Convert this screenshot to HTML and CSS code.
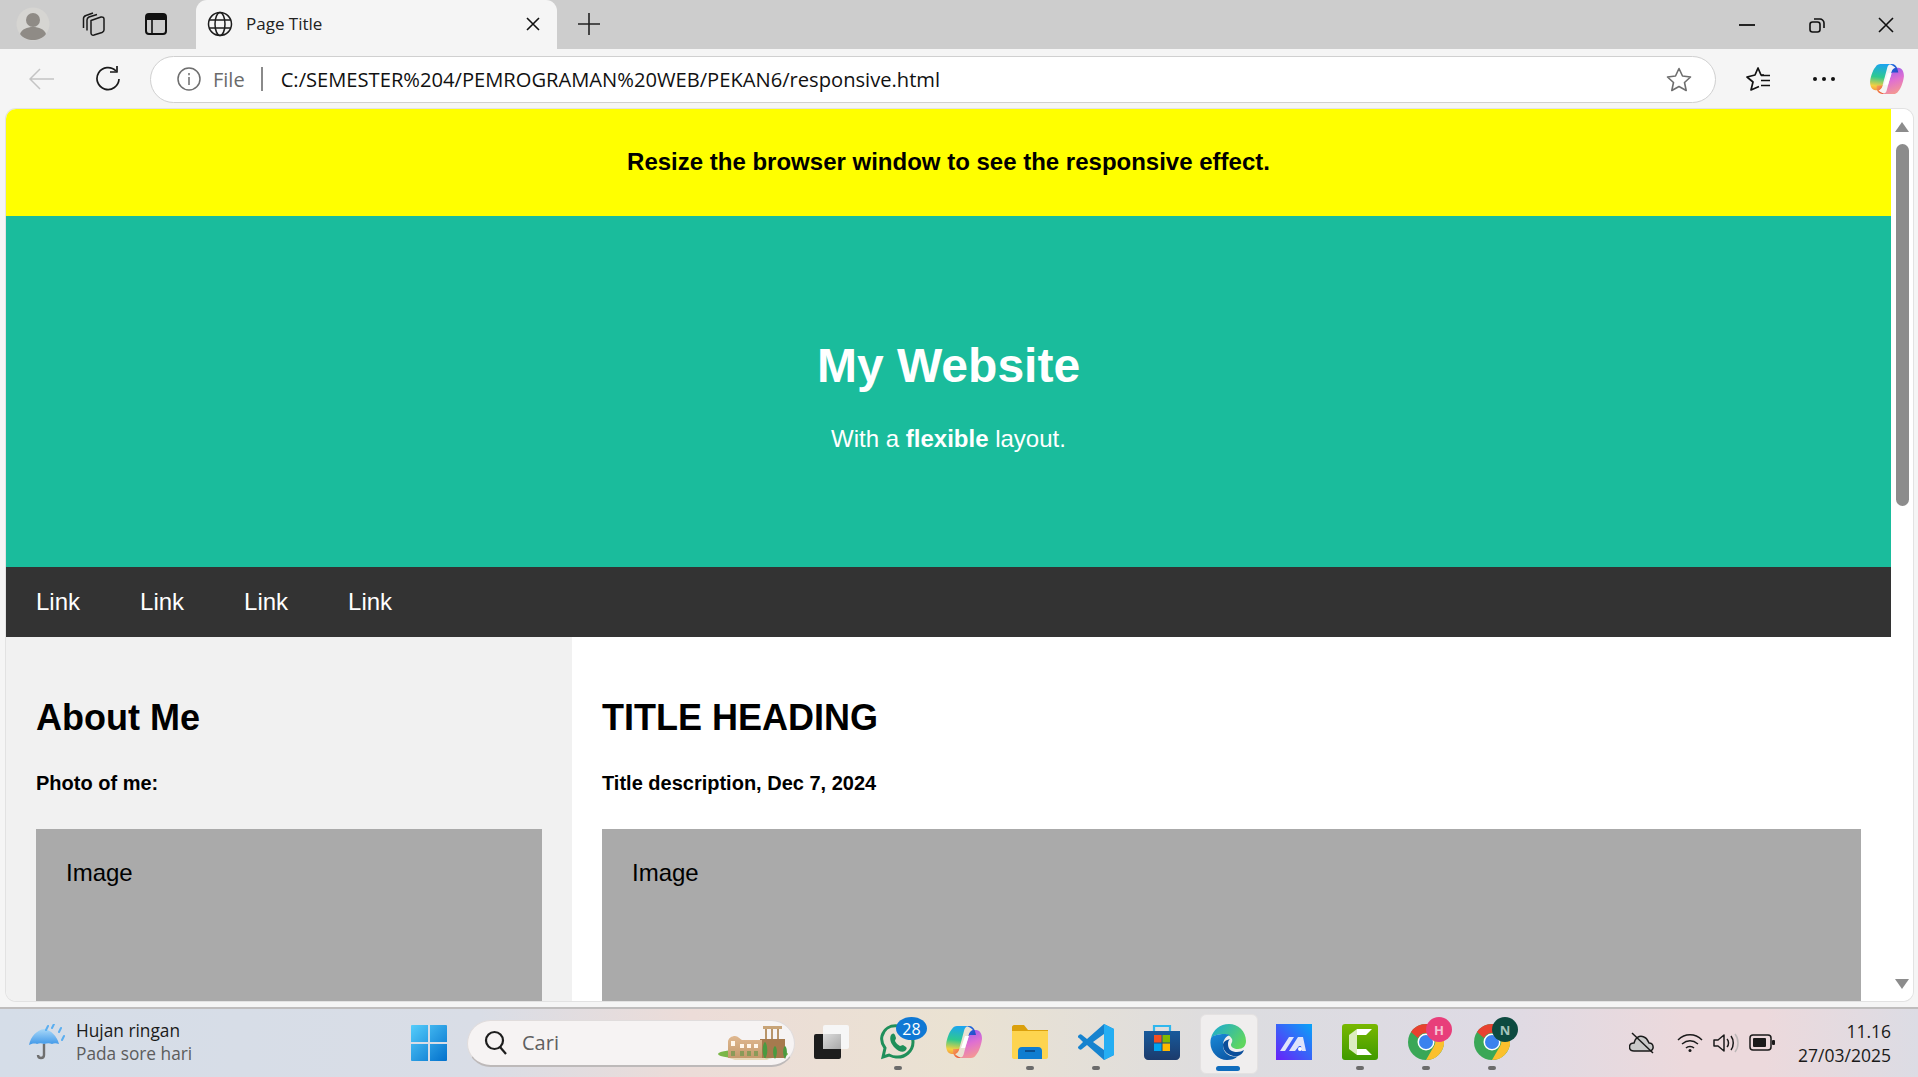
FILE: index.html
```html
<!DOCTYPE html>
<html lang="en">
<head>
    <meta charset="UTF-8">
    <title>Page Title</title>
    <link rel="stylesheet" href="styles.css">
</head>
<body>
<svg class="defs" width="0" height="0">
    <defs>
        <linearGradient id="cpA" x1="0.5" y1="0" x2="0.4" y2="1"><stop offset="0" stop-color="#1ba4f0"/><stop offset="0.5" stop-color="#2fc98f"/><stop offset="0.85" stop-color="#f5d040"/><stop offset="1" stop-color="#f5a040"/></linearGradient>
        <linearGradient id="cpB" x1="0.3" y1="0" x2="0.6" y2="1"><stop offset="0" stop-color="#9a5cf0"/><stop offset="0.5" stop-color="#e070d0"/><stop offset="1" stop-color="#f59a90"/></linearGradient>
        <linearGradient id="cpC" x1="0" y1="0" x2="1" y2="1"><stop offset="0" stop-color="#1a7ae8"/><stop offset="1" stop-color="#2a3fc0"/></linearGradient>
        <linearGradient id="cpD" x1="0" y1="0" x2="1" y2="1"><stop offset="0" stop-color="#f8b060"/><stop offset="1" stop-color="#e8402c"/></linearGradient>
        <linearGradient id="winG" x1="0" y1="0" x2="1" y2="1"><stop offset="0" stop-color="#55cdfb"/><stop offset="1" stop-color="#0270cc"/></linearGradient>
        <linearGradient id="edgeA" x1="0" y1="0" x2="1" y2="0.6"><stop offset="0" stop-color="#18a8d8"/><stop offset="1" stop-color="#5fd65f"/></linearGradient>
        <linearGradient id="edgeB" x1="0" y1="0" x2="0.5" y2="1"><stop offset="0" stop-color="#1a8ad8"/><stop offset="1" stop-color="#0c5aa8"/></linearGradient>
        <linearGradient id="mG" x1="1" y1="0" x2="0" y2="1"><stop offset="0" stop-color="#08a4f8"/><stop offset="1" stop-color="#6a20f8"/></linearGradient>
        <linearGradient id="camG" x1="0" y1="0" x2="0" y2="1"><stop offset="0" stop-color="#78b800"/><stop offset="1" stop-color="#3f9a00"/></linearGradient>
        <linearGradient id="storeG" x1="0" y1="0" x2="0" y2="1"><stop offset="0" stop-color="#175a9c"/><stop offset="1" stop-color="#1c3b6c"/></linearGradient>
        <linearGradient id="rainG" x1="0" y1="0" x2="0" y2="1"><stop offset="0" stop-color="#a8d8f8"/><stop offset="1" stop-color="#3d96e8"/></linearGradient>
        <linearGradient id="wallG" x1="0" y1="0" x2="0" y2="1"><stop offset="0" stop-color="#e0b890"/><stop offset="1" stop-color="#c49a6c"/></linearGradient>
        <linearGradient id="viewG" x1="0" y1="0" x2="1" y2="1"><stop offset="0" stop-color="#dcdcdc"/><stop offset="1" stop-color="#a8a8a8"/></linearGradient>
        <symbol id="copilot" viewBox="0 0 36 34">
            <path d="M11 1H23C20 1 18.500 3 18 6L14 21C13 25 12 28 9 29H6C2 29 0 25 0 20 1 12 4 6 6 4 7 2 9 1 11 1Z" fill="url(#cpA)"/>
            <path d="M25 33H13C16 33 17.500 31 18 28L22 13C23 9 24 6 27 5H30C34 5 36 9 36 14 35 22 32 28 30 30 29 32 27 33 25 33Z" fill="url(#cpB)"/>
            <path d="M19 1H23C26 1 28 3 29 6L30 10H24C23 10 22 11 22 13 23 8 24 6 27 5 25 3 22 1 19 1Z" fill="url(#cpC)"/>
            <path d="M7 24H12C13 24 14 23 14 21 13 26 12 28 9 29 11 31 14 33 17 33H13C10 33 8 31 7 28Z" fill="url(#cpD)"/>
            <path d="M15 23L19 11 23 11 19 23Z" fill="#fff"/>
        </symbol>
        <symbol id="chrome" viewBox="0 0 36 36">
            <circle cx="18" cy="18" r="18" fill="#3aa757"/>
            <path d="M18 0a18 18 0 0 1 15.600 9H18a9 9 0 0 0-8 5L3 8A18 18 0 0 1 18 0z" fill="#e8412f"/>
            <path d="M33.600 9A18 18 0 0 1 18 36l7.800-13.500A9 9 0 0 0 26 13l7.600-4z" fill="#fbc02d"/>
            <circle cx="18" cy="18" r="8.500" fill="#fff"/>
            <circle cx="18" cy="18" r="7" fill="#3b82ee"/>
        </symbol>
    </defs>
</svg>

<!-- Barra de pestañas -->
<div class="tabstrip">
    <div class="strip-btn first">
        <svg width="34" height="34" viewBox="0 0 34 34"><circle cx="17" cy="17" r="16.500" fill="#d6d5d2"/><circle cx="17" cy="13" r="7" fill="#8f8b86"/><path d="M4 27c2-5 7-7 13-7s11 2 13 7c-3 4-8 6-13 6s-10-2-13-6z" fill="#8f8b86"/></svg>
    </div>
    <div class="strip-btn second">
        <svg width="24" height="24" viewBox="0 0 24 24" fill="none" stroke="#1a1a1a" stroke-width="1.500" stroke-linejoin="round"><path d="M10 8.500L20 5C22 4.500 23 6 23 7V18C23 19 22 20 21 20.500L13 23C11 23.500 10 22.500 10 21Z"/><path d="M6 18.500V8C6 6.500 7 5.500 8 5L16 2.500"/><path d="M2.500 16V6.500C2.500 5 3.500 4 5 3.500L12 1"/></svg>
    </div>
    <div class="strip-btn third">
        <svg width="22" height="24" viewBox="0 0 22 24"><rect x="1" y="2" width="20" height="20" rx="3" fill="none" stroke="#111" stroke-width="2"/><path d="M1 5c0-2 1-3 3-3h14c2 0 3 1 3 3v3H1z" fill="#111"/><path d="M7 8v14" stroke="#111" stroke-width="1.600"/></svg>
    </div>
    <div class="tab">
        <svg width="26" height="26" viewBox="0 0 26 26" fill="none" stroke="#1c1c1c" stroke-width="1.500"><circle cx="13" cy="13" r="11.500"/><ellipse cx="13" cy="13" rx="5" ry="11.500"/><path d="M2.500 9h21M2.500 17h21"/></svg>
        <span class="tab-title">Page Title</span>
        <svg class="tab-close" width="14" height="14" viewBox="0 0 14 14" stroke="#111" stroke-width="1.600"><path d="M1 1l12 12M13 1L1 13"/></svg>
    </div>
    <div class="new-tab">
        <svg width="22" height="22" viewBox="0 0 22 22" stroke="#222" stroke-width="1.600"><path d="M11 0v22M0 11h22"/></svg>
    </div>
    <div class="win-controls">
        <div class="win-btn"><svg width="16" height="16" viewBox="0 0 16 16" stroke="#111" stroke-width="1.800"><path d="M0 8h16"/></svg></div>
        <div class="win-btn"><svg width="16" height="16" viewBox="0 0 16 16" fill="none" stroke="#111" stroke-width="1.600"><rect x="1" y="5" width="10" height="10" rx="2.500"/><path d="M5 2h6c2 0 4 2 4 4v5"/></svg></div>
        <div class="win-btn"><svg width="16" height="16" viewBox="0 0 16 16" stroke="#111" stroke-width="1.600"><path d="M1 1l14 14M15 1L1 15"/></svg></div>
    </div>
</div>

<!-- Barra de direcciones -->
<div class="toolbar">
    <div class="tool-btn back">
        <svg width="26" height="22" viewBox="0 0 26 22" fill="none" stroke="#c4c4c4" stroke-width="1.500"><path d="M1 11h24M11 1L1 11l10 10"/></svg>
    </div>
    <div class="tool-btn reload">
        <svg width="26" height="26" viewBox="0 0 26 26" fill="none" stroke="#1a1a1a" stroke-width="1.700"><path d="M21 5a11 11 0 1 0 3 8"/><path d="M15 6l7 0 0-6" stroke-linejoin="round"/></svg>
    </div>
    <div class="address">
        <svg class="info" width="24" height="24" viewBox="0 0 24 24" fill="none" stroke="#6e6e6e" stroke-width="1.500"><circle cx="12" cy="12" r="11"/><path d="M12 10v8M12 6v2.200"/></svg>
        <span class="scheme">File</span>
        <span class="divider"></span>
        <span class="url">C:/SEMESTER%204/PEMROGRAMAN%20WEB/PEKAN6/responsive.html</span>
        <svg class="star" width="26" height="25" viewBox="0 0 26 25" fill="none" stroke="#6e6e6e" stroke-width="1.600" stroke-linejoin="round"><path d="M13 1.500l3.500 7.500 8 1-6 5.500 1.700 8L13 19.500l-7.200 4 1.700-8-6-5.500 8-1z"/></svg>
    </div>
    <div class="tool-btn fav">
        <svg width="25" height="24" viewBox="0 0 25 24" fill="none" stroke="#111" stroke-width="1.700" stroke-linejoin="round"><path d="M18 8H15L12 1 9 8 1 10 7 15 5 23 13 19.500"/><path d="M15 8.500H24M15 13.500H24M15 18.500H24" stroke-width="1.500"/></svg>
    </div>
    <div class="tool-btn dots"><span></span><span></span><span></span></div>
    <div class="tool-btn copilot-btn">
        <svg width="34" height="32"><use href="#copilot"/></svg>
    </div>
</div>

<!-- Página -->
<div class="viewport">
    <div class="page">
        <div class="notice"><b>Resize the browser window to see the responsive effect.</b></div>
        <div class="header">
            <h1>My Website</h1>
            <p>With a <b>flexible</b> layout.</p>
        </div>
        <div class="navbar">
            <a>Link</a>
            <a>Link</a>
            <a>Link</a>
            <a>Link</a>
        </div>
        <div class="row">
            <div class="side">
                <h2>About Me</h2>
                <h5>Photo of me:</h5>
                <div class="fakeimg">Image</div>
            </div>
            <div class="main">
                <h2>TITLE HEADING</h2>
                <h5>Title description, Dec 7, 2024</h5>
                <div class="fakeimg">Image</div>
            </div>
        </div>
    </div>
    <div class="scrollbar">
        <span class="arrow up"></span>
        <div class="track"><div class="thumb"></div></div>
        <span class="arrow down"></span>
    </div>
</div>

<!-- Barra de tareas -->
<div class="taskbar">
    <div class="weather">
        <svg width="36" height="38" viewBox="0 0 36 38"><path d="M15 20v11c0 4-6 4-6 0" fill="none" stroke="#6f6f6f" stroke-width="2.400"/><path d="M0 21C2 12 8 6 15 5c7 1 13 7 15 15-3-1-5-1-7 0-2-1-5-1-8 0-2-1-5-1-7 0-3-1-6 0-8 1z" fill="url(#rainG)"/><path d="M19 2l-2 4M25 0l-2 4M32 4l-2 4M35 12l-2 4" stroke="#5aaef0" stroke-width="2" stroke-linecap="round"/></svg>
        <div class="weather-text">
            <div class="w1">Hujan ringan</div>
            <div class="w2">Pada sore hari</div>
        </div>
    </div>
    <div class="start">
        <svg width="36" height="36" viewBox="0 0 36 36" fill="url(#winG)"><path d="M1 0h16v17H0V1c0-.5.500-1 1-1zM19 0h16c.5 0 1 .5 1 1v16H19zM0 19h17v17H1c-.5 0-1-.5-1-1zM19 19h17v16c0 .5-.5 1-1 1H19z"/></svg>
    </div>
    <div class="search">
        <svg width="24" height="26" viewBox="0 0 24 26" fill="none" stroke="#1d1d1d" stroke-width="2.200"><circle cx="10.500" cy="10.500" r="8.500"/><path d="M16 17l6 7"/></svg>
        <span class="search-text">Cari</span>
        <svg class="monument" width="76" height="36" viewBox="0 0 76 36">
            <ellipse cx="36" cy="29" rx="35" ry="5" fill="#7ab648"/>
            <path d="M46 1h19v3H46z" fill="#c8a478"/>
            <path d="M48 4h2v10h-2zM54 4h2v10h-2zM60 4h2v10h-2z" fill="#b89468"/>
            <path d="M43 14h25v19H43z" fill="#a67a4e"/>
            <path d="M11 33V17c0-4 4-6 7-6 3 0 5 3 7 4h20v18z" fill="url(#wallG)"/>
            <path d="M14 16h4v5h-4zM23 19h4v4h-4zM30 19h4v4h-4zM37 19h4v4h-4z" fill="#fff6ea"/>
            <path d="M14 26h4v5h-4zM23 26h4v5h-4zM30 26h4v5h-4zM37 26h4v5h-4z" fill="#8a9a58"/>
            <path d="M48 34c-4-6-2-16 0-17 2 1 4 11 0 17zM58 34c-3-5-2-12 0-13 2 1 3 8 0 13zM68 34c-3-5-2-12 0-13 2 1 3 8 0 13z" fill="#4a9a40"/>
            <path d="M12 33h36l4 2H18z" fill="#e8d8b8"/>
        </svg>
    </div>
    <div class="tasks">
        <div class="task">
            <svg width="36" height="34" viewBox="0 0 36 34"><rect x="0" y="9" width="27" height="25" rx="2" fill="#1d1d1d"/><rect x="9" y="0" width="26" height="24" rx="2" fill="#f6f6f6"/><rect x="9" y="9" width="18" height="15" fill="url(#viewG)"/></svg>
        </div>
        <div class="task on">
            <svg width="36" height="36" viewBox="0 0 36 36"><path d="M3 33l2-9C2 20 1 16 2 12 4 5 10 1 18 2c9 1 15 8 15 16 0 9-8 16-17 15-3 0-5-1-7-2z" fill="none" stroke="#1f8f5a" stroke-width="3"/><path d="M11 11c2-2 3-2 4 0l1 3c0 1-1 2-1 3 1 2 3 4 5 5 1 0 2-1 3-1l3 2c1 1 1 2-1 4-3 2-7 0-10-3-4-4-6-9-4-13z" fill="#1f8f5a"/></svg>
            <span class="badge blue">28</span>
        </div>
        <div class="task"><svg width="36" height="34"><use href="#copilot"/></svg></div>
        <div class="task on">
            <svg width="36" height="34" viewBox="0 0 36 34"><path d="M0 2c0-1 1-2 2-2h10l4 5h20v5H0z" fill="#dba00c"/><path d="M0 6h36v26c0 1-1 2-2 2H2c-1 0-2-1-2-2z" fill="#fdd44f"/><path d="M6 34v-8c0-2 1-4 4-4h16c3 0 4 2 4 4v8z" fill="#0f7dd0"/><path d="M13 26h10" stroke="#0a4f8f" stroke-width="2"/></svg>
        </div>
        <div class="task on">
            <svg width="36" height="36" viewBox="0 0 36 36"><path fill-rule="evenodd" d="M26 0L9 15 4 11C3 10 2 10 1 11L0 12C0 13 0 14 1 14L5 18 1 22C0 23 0 23 0 24L1 25C2 26 3 26 4 25L9 21 26 36 36 31V5ZM26 10V26L15 18Z" fill="#1683cf"/><path d="M26 0L36 5V31L26 36Z" fill="#25aef3"/></svg>
        </div>
        <div class="task">
            <svg width="36" height="36" viewBox="0 0 36 36"><path d="M10 7V2h16v5" fill="none" stroke="#2fb7ee" stroke-width="2.200"/><path d="M0 7h36v25c0 2-2 4-4 4H4c-2 0-4-2-4-4z" fill="url(#storeG)"/><path d="M10 11h7.500v7.500H10z" fill="#f25022"/><path d="M18.500 11H26v7.500h-7.500z" fill="#7fba00"/><path d="M10 19.500h7.500V27H10z" fill="#00a4ef"/><path d="M18.500 19.500H26V27h-7.500z" fill="#ffb900"/></svg>
        </div>
        <div class="task active">
            <svg width="36" height="36" viewBox="0 0 36 36"><path d="M1 14C3 6 10 0 19 0c9 0 17 7 17 17 0 5-3 8-8 8-4 0-7-2-7-4 0-2 2-3 1-6-2-4-6-5-9-5-5 0-10 2-12 4z" fill="url(#edgeA)"/><path d="M1 14C-2 26 7 36 17 36c4 0 8-1 11-4-7 2-15-2-15-11 0-5 3-9 7-10-2-1-4-1-6-1-5 0-11 1-13 4z" fill="url(#edgeB)"/><path d="M13 21c0 7 7 12 15 11 3-1 5-3 6-6-2 1-4 2-7 2-5 0-9-2-9-8 0-3 1-4 2-5-4 1-7 3-7 6z" fill="#0a4d9a"/></svg>
            <span class="active-bar"></span>
        </div>
        <div class="task">
            <svg width="36" height="36" viewBox="0 0 36 36"><rect width="36" height="36" fill="url(#mG)"/><path d="M4 27l9-14h5l-9 14zM13 27l9-14h5l3 14h-4l-1-5-2 0-4 5z" fill="#dfe3fa"/><circle cx="24" cy="25" r="2" fill="#fff"/></svg>
        </div>
        <div class="task on">
            <svg width="36" height="36" viewBox="0 0 36 36"><rect width="36" height="36" rx="3" fill="url(#camG)"/><path d="M7 11L15 5V31L7 25Z" fill="#dcecc0"/><path d="M15 5H30L24 11H15ZM15 25H24L30 31H15Z" fill="#fff"/></svg>
        </div>
        <div class="task on">
            <svg width="36" height="36"><use href="#chrome"/></svg>
            <span class="badge pink">H</span>
        </div>
        <div class="task on">
            <svg width="36" height="36"><use href="#chrome"/></svg>
            <span class="badge green">N</span>
        </div>
    </div>
    <div class="tray">
        <svg class="cloud" width="26" height="22" viewBox="0 0 26 22"><path d="M5 19c-6 0-6-8 0-8 1-5 5-8 10-6 3 1 4 4 5 6 5 0 6 8 0 8z" fill="#c9c9c9" stroke="#1a1a1a" stroke-width="1.500"/><path d="M3 1l21 20" stroke="#1a1a1a" stroke-width="1.500"/></svg>
        <svg width="26" height="20" viewBox="0 0 26 20" fill="none" stroke="#1a1a1a" stroke-width="1.500"><path d="M1 7c7-7 17-7 24 0M5 11c5-4 11-4 16 0M9 15c2-2 6-2 8 0"/><circle cx="13" cy="17.500" r="1.500" fill="#1a1a1a" stroke="none"/></svg>
        <svg width="26" height="20" viewBox="0 0 26 20" fill="none" stroke="#1a1a1a" stroke-width="1.500"><path d="M1 7h4l6-5v16l-6-5H1z" stroke-linejoin="round"/><path d="M14 6c2 2 2 6 0 8M18 3c3 4 3 10 0 14"/><path d="M22 1c4 5 4 13 0 18" stroke="#bdb8b8"/></svg>
        <svg width="26" height="18" viewBox="0 0 26 18"><rect x="1" y="1" width="21" height="15" rx="3" fill="none" stroke="#1a1a1a" stroke-width="1.500"/><rect x="4" y="4" width="13" height="9" rx="1" fill="#1a1a1a"/><rect x="23" y="6" width="3" height="5" rx="1" fill="#1a1a1a"/></svg>
    </div>
    <div class="clock">
        <div>11.16</div>
        <div>27/03/2025</div>
    </div>
</div>
</body>
</html>
```

FILE: styles.css
```css
/* Estilos generales */
* {
    box-sizing: border-box;
}

html, body {
    margin: 0;
    padding: 0;
    height: 100%;
    overflow: hidden;
}

body {
    display: flex;
    flex-direction: column;
    width: 1918px;
    height: 1077px;
    background: #f5f5f5;
    font-family: "Open Sans", sans-serif;
    color: #111;
}

.defs {
    position: absolute;
}

/* Barra de pestañas */
.tabstrip {
    display: flex;
    align-items: center;
    flex: none;
    height: 49px;
    background: #cdcdcd;
}

.strip-btn {
    display: flex;
    flex: none;
    justify-content: center;
    align-items: center;
    height: 49px;
    padding-bottom: 2px;
}

.strip-btn svg {
    display: block;
}

.first {
    width: 66px;
}

.second {
    width: 54px;
}

.third {
    width: 72px;
}

.tab {
    display: flex;
    flex: none;
    align-items: center;
    width: 361px;
    height: 49px;
    margin-left: 4px;
    padding: 0 17px 2px 11px;
    background: #f5f5f5;
    border-radius: 11px 11px 0 0;
}

.tab-title {
    flex: 1;
    margin-left: 13px;
    font-size: 17px;
    color: #222;
}

.new-tab {
    display: flex;
    flex: none;
    justify-content: center;
    width: 64px;
    padding-bottom: 2px;
}

.win-controls {
    display: flex;
    margin-left: auto;
    margin-right: -3px;
}

.win-btn {
    display: flex;
    justify-content: center;
    align-items: center;
    width: 69.500px;
    height: 46px;
}

/* Barra de direcciones */
.toolbar {
    display: flex;
    align-items: center;
    flex: none;
    height: 60px;
    background: #f5f5f5;
}

.tool-btn {
    display: flex;
    flex: none;
    justify-content: center;
    align-items: center;
}

.back {
    width: 84px;
}

.reload {
    width: 48px;
}

.address {
    display: flex;
    flex: none;
    align-items: center;
    width: 1566px;
    height: 47px;
    margin-left: 18px;
    padding: 0 23px 0 26px;
    background: #fff;
    border: 1.5px solid #d0d0d0;
    border-radius: 24px;
}

.scheme {
    margin-left: 12px;
    font-size: 20px;
    color: #6a6a6a;
}

.divider {
    width: 2px;
    height: 24px;
    margin: 0 18px 0 16px;
    background: #8a8a8a;
}

.url {
    flex: 1;
    font-size: 20.150px;
    color: #111;
    white-space: nowrap;
}

.fav {
    width: 85px;
}

.dots {
    width: 46px;
    gap: 5px;
}

.dots span {
    width: 4px;
    height: 4px;
    border-radius: 50%;
    background: #111;
}

.copilot-btn {
    width: 71px;
    padding-left: 9px;
}

/* Página */
.viewport {
    display: flex;
    flex: none;
    height: 892px;
    margin: 0 5px 0 6px;
    overflow: hidden;
    background: #fff;
    border-radius: 10px;
    box-shadow: 0 0 0 1px #e2e2e2;
}

.page {
    flex: 1;
    min-width: 0;
    font-family: "Liberation Sans", Arial, sans-serif;
    color: #000;
}

.notice {
    height: 107px;
    padding-top: 39px;
    background: #ff0;
    font-size: 24px;
    line-height: 27px;
    text-align: center;
}

.header {
    height: 351px;
    padding-top: 122px;
    background: #1abc9c;
    color: #fff;
    text-align: center;
}

.header h1 {
    margin: 0;
    font-size: 48px;
    line-height: 55px;
}

.header p {
    margin: 32px 0 0;
    font-size: 24px;
    line-height: 27px;
}

.navbar {
    display: flex;
    height: 70px;
    background: #333;
}

.navbar a {
    padding: 0 30px;
    color: #fff;
    font-size: 24px;
    line-height: 70px;
}

.row {
    display: flex;
}

.side {
    width: 566px;
    padding: 60px 30px 0;
    background: #f1f1f1;
}

.main {
    flex: 1;
    padding: 60px 30px 0;
    background: #fff;
}

h2 {
    margin: 0;
    font-size: 36px;
    line-height: 41px;
}

h5 {
    margin: 34px 0 0;
    font-size: 20px;
    line-height: 23px;
}

.fakeimg {
    height: 300px;
    margin-top: 34px;
    padding: 30px;
    background: #aaa;
    font-size: 24px;
    line-height: 27px;
}

.scrollbar {
    display: flex;
    flex-direction: column;
    align-items: center;
    flex: none;
    width: 22px;
    height: 100%;
    padding: 13px 0 12px;
    background: #fff;
}

.track {
    flex: 1;
    padding-top: 12px;
}

.thumb {
    width: 13px;
    height: 362px;
    border-radius: 7px;
    background: #8c8c8c;
}

.arrow {
    flex: none;
    width: 0;
    height: 0;
    border-left: 7px solid transparent;
    border-right: 7px solid transparent;
}

.arrow.up {
    border-bottom: 10px solid #8c8c8c;
}

.arrow.down {
    border-top: 10px solid #8c8c8c;
}

/* Barra de tareas */
.taskbar {
    position: relative;
    display: flex;
    align-items: center;
    flex: none;
    height: 70px;
    margin-top: 6px;
    background: linear-gradient(to right, #d5dde8 0%, #d9dde6 25%, #ecdcd8 36%, #eae2d2 50%, #dcdce0 65%, #dedae4 78%, #ecd9dc 88%, #ecd9dc 92%, #dcdce4 100%);
    border-top: 2px solid #bfbdbd;
}

.weather {
    display: flex;
    flex: none;
    align-items: center;
    width: 411px;
    padding-left: 29px;
}

.weather-text {
    margin-left: 11px;
    padding-bottom: 3px;
    font-size: 17.300px;
    line-height: 23px;
}

.w1 {
    color: #1a1a1a;
}

.w2 {
    color: #5c5c5c;
}

.start {
    display: flex;
    flex: none;
    width: 56px;
}

.search {
    display: flex;
    flex: none;
    align-items: center;
    width: 328px;
    height: 47px;
    padding-left: 16px;
    background: #f6f3f3;
    border: 1px solid #e0dcdc;
    border-bottom: 2px solid #bdb9b9;
    border-radius: 24px;
}

.search-text {
    flex: 1;
    margin-left: 14px;
    font-size: 20px;
    color: #5f5f5f;
}

.monument {
    display: block;
    margin-right: 1px;
}

.tasks {
    display: flex;
    flex: none;
    margin-left: 4px;
}

.task {
    position: relative;
    display: flex;
    flex: none;
    justify-content: center;
    align-items: center;
    width: 66px;
    height: 68px;
    padding-bottom: 2px;
}

.task.on::after {
    content: "";
    position: absolute;
    left: 29px;
    bottom: 7px;
    width: 8px;
    height: 4px;
    border-radius: 2px;
    background: #6b6b6b;
}

.task.active::before {
    content: "";
    position: absolute;
    left: 5px;
    top: 5px;
    width: 56px;
    height: 58px;
    background: #f0eeee;
    border: 1px solid #e4e1e1;
    border-radius: 6px;
}

.task.active svg {
    position: relative;
}

.active-bar {
    position: absolute;
    left: 21px;
    bottom: 6px;
    width: 24px;
    height: 5px;
    border-radius: 3px;
    background: #0f6cbd;
}

.badge {
    position: absolute;
    top: 8px;
    right: 4px;
    display: flex;
    justify-content: center;
    align-items: center;
    width: 31px;
    height: 23px;
    border-radius: 50%;
    color: #fff;
    font-size: 16px;
}

.badge.blue {
    background: #0f78d4;
}

.badge.pink {
    right: 7px;
    width: 26px;
    height: 25px;
    font-size: 13px;
    font-weight: 700;
    color: #f6c0d2;
    background: #e83e7a;
}

.badge.green {
    right: 7px;
    width: 26px;
    height: 25px;
    font-size: 13px;
    font-weight: 700;
    color: #a5c4bc;
    background: #0d4a40;
}

.tray {
    display: flex;
    flex: none;
    align-items: center;
    gap: 10px;
    margin-left: 104px;
}

.cloud {
    margin-right: 12px;
}

.clock {
    margin-left: auto;
    padding-right: 27px;
    font-size: 17.500px;
    line-height: 24px;
    text-align: right;
    color: #1a1a1a;
}
```
